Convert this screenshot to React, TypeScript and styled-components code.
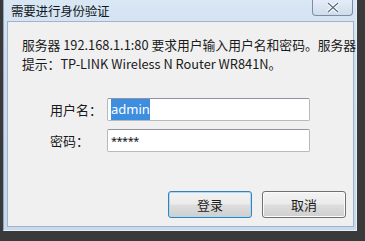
import React from 'react';
import styled, { createGlobalStyle } from 'styled-components';

const GlobalStyle = createGlobalStyle`
  html, body {
    margin: 0;
    padding: 0;
    background: #3a3a3a;
    width: 365px;
    height: 241px;
    overflow: hidden;
  }
  body {
    font-family: "Noto Sans CJK SC", "Noto Sans", sans-serif;
  }
`;

const Desktop = styled.div`
  display: flex;
  width: 365px;
  height: 241px;
  padding-left: 3px;
  box-sizing: border-box;
`;

const Window = styled.div`
  position: relative;
  width: 354px;
  height: 231px;
  box-sizing: border-box;
  display: flex;
  flex-direction: column;
  padding: 0 2px 3px 3px;
  background: linear-gradient(to bottom, #d9e6f4 0%, #cddcee 30%, #c8d9ec 100%);
  border-right: 1px solid #e8eef6;
  border-bottom: 1px solid #e8eef6;
  border-left: 1px solid #8ea4bf;
`;

const TitleBar = styled.div`
  height: 21px;
  display: flex;
  align-items: center;
  padding-left: 4px;
  font-size: 12.5px;
  color: #101820;
  letter-spacing: -0.2px;
`;

const CloseButton = styled.div`
  position: absolute;
  top: -1px;
  right: 3px;
  width: 41px;
  height: 17px;
  box-sizing: border-box;
  border: 1px solid #7c8da3;
  border-top: none;
  border-radius: 0 0 4px 4px;
  background: linear-gradient(to bottom, #e6eef8, #cfdcec);
  display: flex;
  align-items: center;
  justify-content: center;
`;

const Panel = styled.div`
  flex: 1;
  display: flex;
  flex-direction: column;
  background: #f0f0f0;
  border: 1px solid #9fb3ca;
  padding: 13px 7px 8px 14px;
`;

const Message = styled.div`
  font-size: 12.8px;
  line-height: 19px;
  color: #1a1a1a;
  white-space: nowrap;
`;

const Form = styled.div`
  display: grid;
  grid-template-columns: 57px 203px;
  row-gap: 8px;
  align-items: center;
  margin-top: 25px;
  margin-left: 28px;
`;

const Label = styled.div`
  font-size: 13px;
  color: #1a1a1a;
`;

const Input = styled.div<{ $masked?: boolean }>`
  height: 23px;
  box-sizing: border-box;
  background: #fff;
  border: 1px solid #b5b9c2;
  border-top-color: #8e949e;
  border-radius: 2px;
  display: flex;
  align-items: center;
  padding-left: 3px;
  font-family: "Noto Sans", "Liberation Sans", sans-serif;
  font-size: ${(p) => (p.$masked ? '11px' : '13px')};
  letter-spacing: ${(p) => (p.$masked ? '-0.5px' : '0')};
  color: #111;
`;

const Selected = styled.span`
  background: #3d8ee0;
  color: #fff;
  padding: 1px 0;
  line-height: 19px;
`;

const ButtonRow = styled.div`
  margin-top: auto;
  display: flex;
  justify-content: flex-end;
  gap: 10px;
`;

const Button = styled.div<{ $primary?: boolean }>`
  width: 84px;
  height: 27px;
  box-sizing: border-box;
  border-radius: 3px;
  border: 1px solid ${(p) => (p.$primary ? '#3c7fb1' : '#707070')};
  box-shadow: ${(p) => (p.$primary ? 'inset 0 0 0 1px #a8dcf4' : 'inset 0 0 0 1px #fbfbfb')};
  background: linear-gradient(to bottom, #f3f3f3 0%, #ebebeb 48%, #dddddd 52%, #cfcfcf 100%);
  display: flex;
  align-items: center;
  justify-content: center;
  font-size: 13px;
  color: #1a1a1a;
`;

export default function App() {
  return (
    <>
      <GlobalStyle />
      <Desktop>
        <Window>
          <TitleBar>需要进行身份验证</TitleBar>
          <CloseButton>
            <svg width="14" height="11" viewBox="0 0 14 11">
              <path d="M2 1 L12 10 M12 1 L2 10" stroke="#ffffff" strokeWidth="3.2" />
              <path d="M2 1 L12 10 M12 1 L2 10" stroke="#5a6a80" strokeWidth="1.2" />
            </svg>
          </CloseButton>
          <Panel>
            <Message>
              服务器 192.168.1.1:80 要求用户输入用户名和密码。服务器
              <br />
              提示：TP-LINK Wireless N Router WR841N。
            </Message>
            <Form>
              <Label>用户名：</Label>
              <Input>
                <Selected>admin</Selected>
              </Input>
              <Label>密码：</Label>
              <Input $masked>*****</Input>
            </Form>
            <ButtonRow>
              <Button $primary>登录</Button>
              <Button>取消</Button>
            </ButtonRow>
          </Panel>
        </Window>
      </Desktop>
    </>
  );
}
